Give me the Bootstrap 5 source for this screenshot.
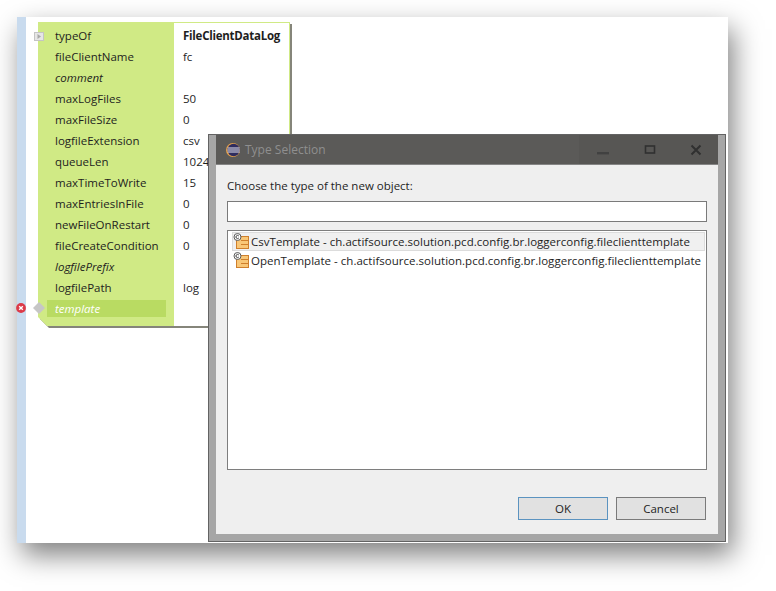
<!DOCTYPE html>
<html lang="en">
<head>
<meta charset="utf-8">
<title>Type Selection</title>
<link href="https://cdn.jsdelivr.net/npm/bootstrap@5.3.0/dist/css/bootstrap.min.css" rel="stylesheet">
<style>
html,body{background:#fff;height:591px;overflow:hidden}
body{font-family:"Open Sans","Noto Sans",sans-serif;font-size:11.5px;color:#1e1e1e;line-height:21px}
.shot{margin:17px 0 0 17px;width:711px;height:526px;background:#fff;box-shadow:5px 12px 26px rgba(0,0,0,.5)}
.ruler{width:9px;background:#c9dbee;flex:none}
.canvas{flex:1}
.node{left:21px;top:5px;width:252px;height:304px}
.node-shade,.node-body{clip-path:polygon(0 0,100% 0,100% 100%,9px 100%,0 295px)}
.node-shade{left:2px;top:2px;width:100%;height:100%;background:#85857a}
.node-body{left:0;top:0;width:100%;height:100%;background:linear-gradient(90deg,#d0ea85 136px,#fff 136px);border-top:1px solid #d0ea85;border-right:1px solid #d0ea85;padding-top:1.5px}
.lbl{width:136px;padding-left:17px;flex:none}
.val{padding-left:9px}
.val.strong{font-weight:700;letter-spacing:-.25px}
.err .lbl{padding-left:9px}
.err .lbl span{display:block;width:119px;height:17px;line-height:17px;margin:2.5px 0 0;padding-left:8px;background:#b9db62;color:#fff;font-style:italic}
.exp{left:17px;top:15px}
.erricon{left:-1px;top:286px}
.diamond{left:16px;top:285px}
.dlg{left:191px;top:117px;width:518px;height:408px;border:1px solid #636363;background:#a6a6a6}
.dlg-title{margin-left:7px;margin-right:7px;height:30px;background:#5b5a58;color:#8f8f8f;font-size:12px;border-bottom:1px solid #858585}
.dlg-icon{margin-left:10px}
.dlg-title .tt{margin-left:5px}
.win{width:47px}
.win.last{width:45px}
.win-area{background:#575654;height:100%}
.dlg-body{margin:0 7px;height:369px;background:#efefef;padding:10px 11px 0}
.field{height:21px;border:1px solid #7a7a7a;background:#fff;margin-top:5px}
.picker{height:240px;border:1px solid #7e7e7e;background:#fff;margin-top:8px;padding:1px 1px 0 4px}
.item{height:19px;line-height:17px;border:1px solid transparent;white-space:nowrap;letter-spacing:.02px}
.item.sel{background:#f0f0f0;border-color:#dcdcdc}
.item svg{margin:0 1px 0 0;flex:none}
.actions{margin-top:27px;padding-left:291px;width:100%;gap:8px}
.pbtn{width:90px;height:23px;padding:0;border:1px solid #7a7a7a;background:#e1e1e1;color:#1e1e1e;font-size:11.5px;line-height:20px;border-radius:0}
.pbtn.def{border-color:#5b93c0}
</style>
</head>
<body>
<div class="shot d-flex position-relative">
  <div class="ruler"></div>
  <div class="canvas"></div>

  <div class="node position-absolute">
    <div class="node-shade position-absolute"></div>
    <div class="node-body position-absolute">
      <div class="d-flex"><div class="lbl">typeOf</div><div class="val strong">FileClientDataLog</div></div>
      <div class="d-flex"><div class="lbl">fileClientName</div><div class="val">fc</div></div>
      <div class="d-flex"><div class="lbl fst-italic">comment</div><div class="val"></div></div>
      <div class="d-flex"><div class="lbl">maxLogFiles</div><div class="val">50</div></div>
      <div class="d-flex"><div class="lbl">maxFileSize</div><div class="val">0</div></div>
      <div class="d-flex"><div class="lbl">logfileExtension</div><div class="val">csv</div></div>
      <div class="d-flex"><div class="lbl">queueLen</div><div class="val">1024</div></div>
      <div class="d-flex"><div class="lbl">maxTimeToWrite</div><div class="val">15</div></div>
      <div class="d-flex"><div class="lbl">maxEntriesInFile</div><div class="val">0</div></div>
      <div class="d-flex"><div class="lbl">newFileOnRestart</div><div class="val">0</div></div>
      <div class="d-flex"><div class="lbl">fileCreateCondition</div><div class="val">0</div></div>
      <div class="d-flex"><div class="lbl fst-italic">logfilePrefix</div><div class="val"></div></div>
      <div class="d-flex"><div class="lbl">logfilePath</div><div class="val">log</div></div>
      <div class="d-flex err"><div class="lbl"><span>template</span></div><div class="val"></div></div>
    </div>
  </div>
  <svg class="exp position-absolute" width="10" height="9" viewBox="0 0 10 9"><rect x=".5" y=".5" width="9" height="8" fill="#e6e6e6" stroke="#c4c4c4"/><path d="M3.5 2l3.5 2.5L3.5 7z" fill="#a8a8a8"/></svg>
  <svg class="erricon position-absolute" width="10" height="10" viewBox="0 0 10 10"><circle cx="5" cy="5" r="4.9" fill="#dc3a48"/><path d="M3.2 3.2l3.6 3.6M6.8 3.2l-3.6 3.6" stroke="#fff" stroke-width="1.4"/></svg>
  <svg class="diamond position-absolute" width="12" height="12" viewBox="0 0 12 12"><path d="M6 0l6 6-6 6-6-6z" fill="#c6c6c6"/></svg>

  <div class="dlg position-absolute">
    <div class="dlg-title d-flex align-items-center">
      <svg class="dlg-icon flex-none" width="14" height="14" viewBox="0 0 14 14"><circle cx="7" cy="7" r="7" fill="#e8a24a"/><circle cx="7.6" cy="7" r="6.2" fill="#2f2c5e"/><path d="M1.6 5h12M1.4 7h12.4M1.6 9h12" stroke="#e8e8f0" stroke-width="1"/></svg>
      <span class="tt">Type Selection</span>
      <div class="win-area d-flex align-items-center ms-auto">
        <div class="win d-flex justify-content-center"><svg width="14" height="14" viewBox="0 0 14 14"><rect x="1" y="9" width="12" height="2.4" fill="#414141"/></svg></div>
        <div class="win d-flex justify-content-center"><svg width="12" height="12" viewBox="0 0 12 12"><rect x="1.5" y="2" width="9" height="7" fill="none" stroke="#303030" stroke-width="1.6"/></svg></div>
        <div class="win last d-flex justify-content-center"><svg width="12" height="12" viewBox="0 0 12 12"><path d="M1.5 1.5l9 9M10.5 1.5l-9 9" stroke="#303030" stroke-width="2"/></svg></div>
      </div>
    </div>
    <div class="dlg-body">
      <div>Choose the type of the new object:</div>
      <div class="field"></div>
      <div class="picker">
        <div class="item sel d-flex align-items-center">
          <svg width="17" height="17" viewBox="0 0 17 17"><rect x="3.5" y="3.5" width="12" height="12" fill="#f9c777" stroke="#cf7f2c"/><path d="M8 7.5h7M8 11.5h7" stroke="#cf7f2c"/><circle cx="4.5" cy="4" r="3.5" fill="#fff" stroke="#5a5a5a"/><path d="M5.8 3a1.6 1.6 0 1 0 0 2" fill="none" stroke="#3b3b3b"/></svg>
          CsvTemplate - ch.actifsource.solution.pcd.config.br.loggerconfig.fileclienttemplate
        </div>
        <div class="item d-flex align-items-center">
          <svg width="17" height="17" viewBox="0 0 17 17"><rect x="3.5" y="3.5" width="12" height="12" fill="#f9c777" stroke="#cf7f2c"/><path d="M8 7.5h7M8 11.5h7" stroke="#cf7f2c"/><circle cx="4.5" cy="4" r="3.5" fill="#fff" stroke="#5a5a5a"/><path d="M5.8 3a1.6 1.6 0 1 0 0 2" fill="none" stroke="#3b3b3b"/></svg>
          OpenTemplate - ch.actifsource.solution.pcd.config.br.loggerconfig.fileclienttemplate
        </div>
      </div>
      <div class="actions d-flex">
        <button type="button" class="btn pbtn def">OK</button>
        <button type="button" class="btn pbtn">Cancel</button>
      </div>
    </div>
  </div>
</div>
<script src="https://cdn.jsdelivr.net/npm/bootstrap@5.3.0/dist/js/bootstrap.bundle.min.js"></script>
</body>
</html>
